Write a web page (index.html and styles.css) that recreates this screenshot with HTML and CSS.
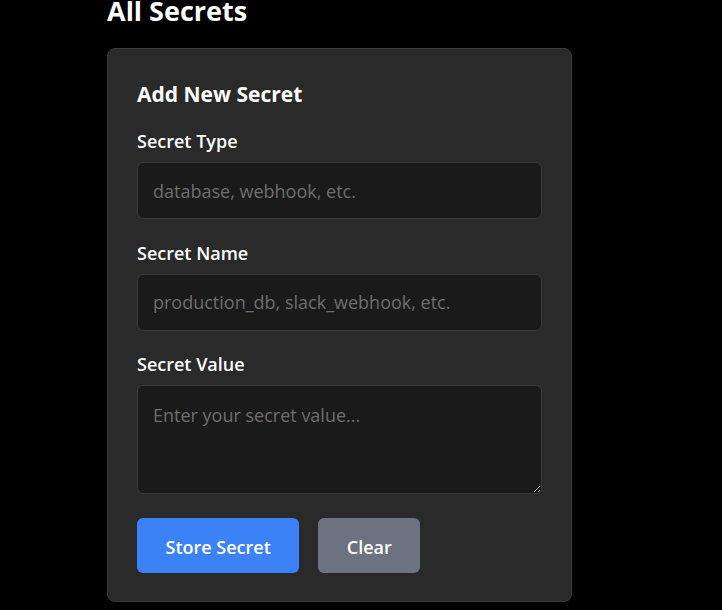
FILE: index.html
```html
<!DOCTYPE html>
<html lang="en">
<head>
<meta charset="utf-8">
<title>All Secrets</title>
<link rel="stylesheet" href="styles.css">
</head>
<body>
<main class="page">
  <h2 class="page-title">All Secrets</h2>
  <section class="card">
    <h3 class="card-title">Add New Secret</h3>
    <div class="field">
      <label class="field-label" for="type">Secret Type</label>
      <input class="field-input" id="type" type="text" placeholder="database, webhook, etc.">
    </div>
    <div class="field">
      <label class="field-label" for="name">Secret Name</label>
      <input class="field-input" id="name" type="text" placeholder="production_db, slack_webhook, etc.">
    </div>
    <div class="field">
      <label class="field-label" for="value">Secret Value</label>
      <textarea class="field-input field-textarea" id="value" placeholder="Enter your secret value..."></textarea>
    </div>
    <div class="actions">
      <button class="btn btn-primary" type="button">Store Secret</button>
      <button class="btn btn-secondary" type="button">Clear</button>
    </div>
  </section>
</main>
</body>
</html>
```
FILE: styles.css
```css
* { box-sizing: border-box; }
html, body {
  margin: 0;
  padding: 0;
  background: #000;
  color: #fff;
  font-family: "Open Sans", "Noto Sans", "Liberation Sans", sans-serif;
}
.page {
  width: 465px;
  margin-left: 107px;
  margin-top: -7px;
}
.page-title {
  margin: 0 0 19px;
  font-size: 27px;
  font-weight: 700;
  line-height: 36px;
}
.card {
  background: #2a2a2a;
  border: 1px solid #3a3a3a;
  border-radius: 8px;
  padding: 31px 29px 28px;
}
.card-title {
  margin: 0 0 21px;
  font-size: 21px;
  font-weight: 700;
  line-height: 28px;
}
.field {
  margin-bottom: 21.5px;
}
.field-label {
  display: block;
  font-size: 18px;
  font-weight: 600;
  line-height: 25px;
  margin-bottom: 8px;
}
.field-input {
  display: block;
  width: 100%;
  height: 57px;
  padding: 14px 15px;
  background: #1a1a1a;
  border: 1px solid #3a3a3a;
  border-radius: 6px;
  color: #fff;
  font-family: inherit;
  font-size: 18px;
  outline: none;
}
.field-input::placeholder {
  color: #6e6e6e;
}
.field-textarea {
  height: 109px;
  resize: vertical;
  padding-top: 17px;
}
.actions {
  display: flex;
  gap: 19px;
  padding-top: 2.5px;
}
.btn {
  height: 55px;
  padding: 2px 28.5px 0;
  border: none;
  border-radius: 6px;
  color: #fff;
  font-family: inherit;
  font-size: 18px;
  font-weight: 600;
  cursor: pointer;
}
.btn-primary { background: #3b82f6; }
.btn-secondary { background: #6b7280; }
```
